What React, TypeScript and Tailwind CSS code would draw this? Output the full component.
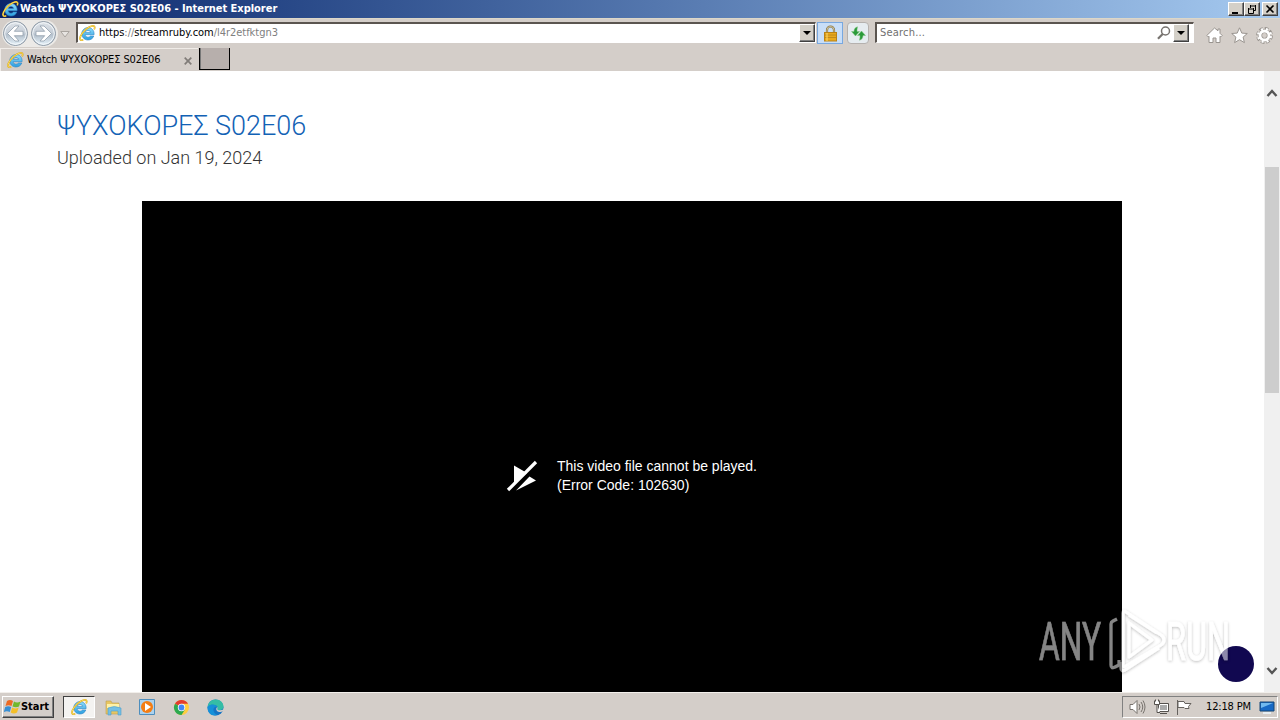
import { useId } from "react";

const pinned = ["ie", "folder", "media", "chrome", "edge"];

function IeIcon({ size = 17 }: { size?: number }) {
  const id = useId();
  return (
    <svg width={size} height={size} viewBox="0 0 17 17" fill="none" className="shrink-0">
      <defs>
        <linearGradient id={id} x1="0" y1="0" x2="0" y2="1">
          <stop stopColor="#8fdcfb" />
          <stop offset="1" stopColor="#2a9fe0" />
        </linearGradient>
      </defs>
      <path
        d="M9 2.600C5.400 2.600 2.800 5.300 2.800 8.800S5.400 15 9 15c2.800 0 4.900-1.500 5.800-4h-3.500c-.5.8-1.300 1.200-2.300 1.200-1.600 0-2.700-1-2.800-2.500h8.900C15.400 5.300 12.700 2.600 9 2.600zM6.300 7.400C6.600 6.200 7.600 5.400 9 5.400s2.300.8 2.600 2z"
        fill={`url(#${id})`}
        stroke="#2f83c4"
        strokeWidth=".6"
      />
      <path d="M4.200 14.800C.4 16.600-.3 13 3.500 8 7.300 3 13.800-.6 15.400 1.500c.5.7.3 1.700-.2 2.800" stroke="#d9a520" strokeWidth="1.700" />
      <path d="M4.200 14.800C.4 16.600-.3 13 3.500 8 7.300 3 13.800-.6 15.400 1.500c.5.7.3 1.700-.2 2.800" stroke="#fbe05a" strokeWidth="1" />
    </svg>
  );
}

function NavButton({ forward = false }: { forward?: boolean }) {
  const id = useId();
  return (
    <svg width="27" height="27" viewBox="0 0 27 27" className="shrink-0">
      <defs>
        <linearGradient id={id} x1="0" y1="0" x2="0" y2="1">
          <stop stopColor="#dfe4e9" />
          <stop offset=".48" stopColor="#c6ced7" />
          <stop offset=".55" stopColor="#b4c0cc" />
          <stop offset="1" stopColor="#e8f4fb" />
        </linearGradient>
      </defs>
      <circle cx="13.500" cy="13.500" r="12" fill={`url(#${id})`} stroke="#8c98a5" />
      <circle cx="13.500" cy="13.500" r="10.800" fill="none" stroke="#f4f8fb" />
      <path
        d="M13 6 5.500 13.500 13 21h4l-4.700-5.300H21v-4.400h-8.700L17 6z"
        fill="#fff"
        stroke="#8795a4"
        strokeWidth=".7"
        transform={forward ? "matrix(-1 0 0 1 27 0)" : undefined}
      />
    </svg>
  );
}

function DropButton() {
  return (
    <span className="flex h-[18px] w-4 shrink-0 items-center justify-center border border-t-white border-l-white border-r-[#404040] border-b-[#404040] bg-[#d4d0c8] shadow-[inset_-1px_-1px_0_#808080]">
      <svg width="8" height="4" viewBox="0 0 8 4"><path d="M0 0h8L4 4z" /></svg>
    </span>
  );
}

function TitleBar() {
  return (
    <div className="flex h-[18px] items-center bg-gradient-to-r from-[#0a246a] to-[#a6caf0] pl-[2px] pr-[2px]">
      <IeIcon />
      <span className="ml-px pt-px text-[11px] font-bold tracking-[-0.030px] text-white">Watch ΨΥΧΟΚΟΡΕΣ S02E06 - Internet Explorer</span>
      <div className="ml-auto flex">
        {["min", "restore", "close"].map((name) => (
          <span
            key={name}
            className="flex h-[14px] w-4 items-center justify-center border border-t-white border-l-white border-r-[#404040] border-b-[#404040] bg-[#d4d0c8] shadow-[inset_-1px_-1px_0_#808080] last:ml-[2px]"
          >
            <svg width="12" height="11" viewBox="0 0 12 11" fill="none" stroke="#000" className="shrink-0">
              {name === "min" && <path d="M2 9h6" strokeWidth="2" />}
              {name === "restore" && <path d="M4 2h6M4.500 1v3M9.500 1v5.500H8M2 5h6M2.500 4v5.500h5V4" />}
              {name === "close" && <path d="m2.500 1.500 7 7m0-7-7 7" strokeWidth="1.600" />}
            </svg>
          </span>
        ))}
      </div>
    </div>
  );
}

function NavBar() {
  return (
    <div className="flex h-[30px] items-start border-t border-[#dcd7c8] pt-px">
      <div className="ml-[2px] flex h-[27px] w-[56px] shrink-0 gap-px rounded-full bg-[#eceae7]">
        <NavButton />
        <NavButton forward />
      </div>
      <svg width="10" height="7" viewBox="0 0 10 7" className="mt-[11px] ml-[2px] shrink-0">
        <path d="M.8.500h8.400L5 6z" fill="#e7e4e1" stroke="#aaa5a0" />
      </svg>
      <div className="mt-[2px] ml-[6px] flex h-[21px] w-[740px] shrink-0 items-center border-t-2 border-l-2 border-r border-b border-t-[#5b5550] border-l-[#5b5550] border-r-white border-b-white bg-white pl-px">
        <IeIcon />
        <span className="ml-[3px] pt-px text-[11px] tracking-[-0.030px] text-[#808080]">
          <span className="text-black">https</span>://<span className="text-black">streamruby.com</span>/l4r2etfktgn3
        </span>
        <span className="ml-auto"><DropButton /></span>
      </div>
      <div className="mt-[2px] ml-px flex h-[22px] w-[26px] shrink-0 items-center justify-center border border-[#78a8e0] bg-[#c8def8]">
        <svg width="15" height="17" viewBox="0 0 15 17">
          <path d="M4 8V5a3.500 3.500 0 0 1 7 0v3" fill="none" stroke="#8a7440" strokeWidth="2.200" />
          <path d="M4 8V5a3.500 3.500 0 0 1 7 0v3" fill="none" stroke="#d9d3b4" strokeWidth=".8" />
          <rect x="1.500" y="7.500" width="12" height="8.500" fill="#e9a91e" stroke="#b98217" />
          <path d="M2 10h11M2 12.500h11" stroke="#c08a1c" />
          <path d="M4 8v8" stroke="#ffda6a" />
        </svg>
      </div>
      <div className="mt-[2px] ml-[4px] flex h-[22px] w-[22px] shrink-0 items-center justify-center rounded-sm border border-[#b5b1ae] bg-[#e6ecf0]">
        <svg width="17" height="15" viewBox="0 0 17 15" fill="#2a9a3a" className="shrink-0">
          <path d="M7.500.8C5 1.500 4 3.200 4 5.500H1.500L5.500 10l4-4.500H7c0-1.500 0-3 .5-4.700zM9.500 14.200c2.500-.7 3.500-2.400 3.500-4.700h2.500l-4-4.500-4 4.500H10c0 1.500 0 3-.5 4.700z" stroke="#7cc47d" strokeWidth=".5" />
        </svg>
      </div>
      <div className="mt-[2px] ml-[6px] flex h-[21px] w-[319px] shrink-0 items-center border-t-2 border-l-2 border-r border-b border-t-[#5b5550] border-l-[#5b5550] border-r-white border-b-white bg-white pr-[4px] pl-[3px]">
        <span className="pt-px text-[11px] tracking-[0.200px] text-[#707070]">Search...</span>
        <svg width="14" height="14" viewBox="0 0 14 14" fill="none" stroke="#77736f" className="mr-[2px] ml-auto">
          <circle cx="8.500" cy="5" r="4" strokeWidth="1.500" />
          <path d="M5.700 8 1 12.800" strokeWidth="2.200" />
        </svg>
        <DropButton />
      </div>
      <div className="mt-[7px] ml-[12px] flex shrink-0 gap-[8px]">
        <svg width="17" height="17" viewBox="0 0 17 17" fill="#fff" stroke="#99948f">
          <path d="M8.500 1 .8 8.500l1.400 1.400.8-.7v6.300h4V11h3v4.500h4V9.200l.8.700 1.400-1.400-2.200-2.200V2h-2v1.800z" />
        </svg>
        <svg width="17" height="17" viewBox="0 0 17 17" fill="#fff" stroke="#99948f">
          <path d="m8.500.8 2.300 5.300 5.500.4-4.200 3.600 1.300 5.500-4.900-2.900-4.900 2.900 1.300-5.500L.7 6.500l5.500-.4z" />
        </svg>
        <svg width="17" height="17" viewBox="0 0 17 17" fill="none">
          <circle cx="8.500" cy="8.500" r="6.900" stroke="#99948f" strokeWidth="3" strokeDasharray="3.600 1.819" />
          <circle cx="8.500" cy="8.500" r="4.400" stroke="#99948f" strokeWidth="4" />
          <circle cx="8.500" cy="8.500" r="4.500" stroke="#fff" strokeWidth="2.800" />
          <circle cx="8.500" cy="8.500" r="6.500" stroke="#fff" strokeWidth="2.200" strokeDasharray="2 3.105" strokeDashoffset="-.7" />
        </svg>
      </div>
    </div>
  );
}

function TabBar() {
  return (
    <div className="flex h-[23px] items-start">
      <div className="flex h-[23px] w-[198px] shrink-0 items-center border-t border-l border-[#f0ece8] pl-[6px]">
        <IeIcon />
        <span className="ml-[3px] pt-px text-[11px] tracking-[-0.110px]">Watch ΨΥΧΟΚΟΡΕΣ S02E06</span>
        <svg width="8" height="8" viewBox="0 0 8 8" className="mt-px mr-[6px] ml-auto">
          <path d="m.7.700 6.600 6.600m0-6.600L.7 7.300" stroke="#807c78" strokeWidth="1.700" />
        </svg>
      </div>
      <div className="ml-px h-[22px] w-[31px] border-r border-b border-l border-black bg-[#b7afac] shadow-[inset_1px_0_0_#777]" />
    </div>
  );
}

function Watermark() {
  return (
    <svg width="202" height="72" viewBox="0 0 202 72" className="pointer-events-none absolute top-[534px] left-[1034px]">
      <defs>
        <filter id="soft" x="-20%" y="-20%" width="140%" height="140%">
          <feDropShadow dx="0" dy="1" stdDeviation="1.500" floodColor="#000" floodOpacity=".5" />
        </filter>
      </defs>
      <g filter="url(#soft)" fontFamily="Roboto" fontSize="53" fill="#fff" stroke="#fff" strokeWidth=".7" opacity=".52">
        <text x="5" y="55" textLength="62" lengthAdjust="spacingAndGlyphs">ANY</text>
        <text x="132" y="55" textLength="64" lengthAdjust="spacingAndGlyphs">RUN</text>
        <g fill="none" strokeWidth="3.200" strokeLinejoin="round">
          <path d="M83 14l-4 2q-2 1-2 3v41q0 4 4 2l4-2v-5" />
          <path d="M89 53V8q0-3 3-1l35 23q3 2 3 5t-3 5L92 61q-3 2-3-1z" />
          <path d="M95 18v34l23-17zM95 10l28 18M87 57v6q0 4 4 2l34-22" />
        </g>
      </g>
    </svg>
  );
}

function Page() {
  return (
    <main className="relative flex h-[621px] overflow-hidden bg-white">
      <div className="flex w-[1264px] flex-col pt-[38px]">
        <h1 className="pl-[57px] font-[Roboto] text-[27px] leading-[34px] font-light tracking-[-0.010px] text-[#1262b5]">ΨΥΧΟΚΟΡΕΣ S02E06</h1>
        <p className="pl-[57px] font-[Roboto] text-[18px] leading-[29px] font-light text-[#333]">Uploaded on Jan 19, 2024</p>
        <div className="mt-[29px] ml-[142px] flex h-[491px] w-[980px] bg-black pt-[256px] pl-[364px] text-white">
          <svg width="32" height="32" viewBox="0 0 32 32" fill="#fff" className="mt-[3px] shrink-0">
            <path d="M8 5.500 21 13l-13 11zM10 30.500 23.500 16.500 30 20.500z" />
            <path d="M4 32 32 4" stroke="#000" strokeWidth="2.200" />
            <path d="M2 30 30 2" stroke="#fff" strokeWidth="3.200" />
          </svg>
          <p className="ml-[19px] font-['Liberation_Sans'] text-[14px] leading-[19px]">
            This video file cannot be played.<br />(Error Code: 102630)
          </p>
        </div>
      </div>
      <div className="flex w-4 flex-col items-center bg-[#f0f0f0] pt-[18px] pb-[17px]">
        <svg width="12" height="9" viewBox="0 0 12 9" className="shrink-0"><path d="m1.500 7 4.500-5 4.500 5" fill="none" stroke="#555" strokeWidth="2.400" /></svg>
        <div className="mt-[69px] h-[226px] w-[14px] shrink-0 bg-[#cdcdcd]" />
        <svg width="12" height="9" viewBox="0 0 12 9" className="mt-auto shrink-0"><path d="m1.500 2 4.500 5 4.500-5" fill="none" stroke="#555" strokeWidth="2.400" /></svg>
      </div>
      <div className="absolute top-[575px] left-[1218px] size-9 rounded-full bg-[#110850]" />
      <Watermark />
    </main>
  );
}

function PinnedIcon({ name }: { name: string }) {
  if (name === "ie") return <IeIcon />;
  return (
    <svg width="17" height="17" viewBox="0 0 17 17">
      {name === "folder" && (
        <>
          <path d="M1 2h5l1 2h7v11H1z" fill="#e8c661" stroke="#bd9e50" strokeWidth=".6" />
          <path d="M2 5h12v4H2z" fill="#fff1a8" />
          <path d="M3 9q6-3 13 0v7h-3v-4H6v4H3z" fill="#75bfe4" stroke="#4b9fc9" strokeWidth=".6" />
        </>
      )}
      {name === "media" && (
        <>
          <path d="M.500.500h15v15H.500z" fill="#acd2ee" stroke="#4e8ebd" />
          <circle cx="8" cy="8" r="6" fill="#f47d13" />
          <path d="m6 4 6 4-6 4z" fill="#fff" />
        </>
      )}
      {name === "chrome" && (
        <>
          <circle cx="8.500" cy="8.500" r="7.500" fill="#ffcd40" />
          <path d="M8.500 8.500 2 4.700A7.500 7.500 0 0 1 15 4.700H8.500z" fill="#e33b2e" />
          <path d="M2 4.700A7.500 7.500 0 0 0 8.500 16l3.500-5.500-3.500-2z" fill="#2da94f" />
          <circle cx="8.500" cy="8.500" r="3.700" fill="#fff" />
          <circle cx="8.500" cy="8.500" r="2.900" fill="#4285f4" />
        </>
      )}
      {name === "edge" && (
        <>
          <circle cx="8.500" cy="8.500" r="8" fill="#1674c4" />
          <path d="M.6 8C1 3.500 4.500.500 8.500.500c5 0 8 3.500 8 7 0 3-3 4-5.500 3.500-2-.500-.5-1.500-.5-3C10.500 6 4 4 .6 8z" fill="#35bda5" />
          <path d="M.6 8C3 4.500 9 5 10.500 8c-2-1-4.500.500-4 3.500.4 2.500 2.500 4 4 4.500C4.500 18 0 13.500.6 8z" fill="#1690d8" />
          <path d="M10.500 8c-2 1-1.500 4 1 4.800 1.700.5 3 .2 4.500-.5l1-2c-2 1-4.500 1.200-6 .7-1.200-.5-.5-1.500-.5-3z" fill="#d4cec9" />
        </>
      )}
    </svg>
  );
}

function Taskbar() {
  return (
    <footer className="flex h-7 items-center border-t border-[#f2efeb] bg-[#d4cec9] pt-px">
      <div className="ml-[2px] flex h-[22px] w-[52px] items-center border border-t-white border-l-white border-r-[#404040] border-b-[#404040] shadow-[inset_-1px_-1px_0_#808080]">
        <svg width="17" height="16" viewBox="0 0 17 16" className="ml-px shrink-0">
          <path d="M3 2q3-2 6 0L7.500 7q-3-1.500-6 0z" fill="#ed6a23" />
          <path d="M10 2.500q3 2 6.500 0L15 7.500q-3 1.500-6.500 0z" fill="#70b82c" />
          <path d="M1.200 8q3-1.500 6 0L5.800 13q-3-1.500-6 0z" fill="#388fd4" />
          <path d="M8.200 8.500q3 2 6.500 0L13 13.500q-3 2-6.300 0z" fill="#f4bf28" />
        </svg>
        <span className="pt-px text-[11px] font-bold tracking-[-0.050px]">Start</span>
      </div>
      <div className="ml-[9px] flex">
        {pinned.map((name) => (
          <span
            key={name}
            className="mr-[2px] flex h-[22px] w-8 items-center justify-center first:border first:border-t-[#404040] first:border-l-[#404040] first:border-r-white first:border-b-white first:bg-[#f4f3f1]"
          >
            <PinnedIcon name={name} />
          </span>
        ))}
      </div>
      <div className="mr-[2px] ml-auto flex h-[22px] w-[156px] items-center border border-t-[#808080] border-l-[#808080] border-r-white border-b-white pl-[6px]">
        <svg width="17" height="16" viewBox="0 0 17 16" fill="#fff" stroke="#77726d" className="shrink-0">
          <path d="M1 5.500h3l4-4v13l-4-4H1z" />
          <path d="M10 5q2 3 0 6M12 3q3.500 5 0 10M14 1.500q4 6.500 0 13" fill="none" />
        </svg>
        <svg width="17" height="16" viewBox="0 0 17 16" fill="#fff" stroke="#55514d" className="ml-[7px] shrink-0">
          <path d="M5.500 4.500h10v8h-10zM7 14.500h7" />
          <path d="M7 6h7v5H7z" fill="#aaa" stroke="none" />
          <path d="M1.500 1.500v4h5v-4M2.500.5v2M5.500.5v2M4 5.500v8h3" />
        </svg>
        <svg width="17" height="16" viewBox="0 0 17 16" fill="#fff" stroke="#66625e" className="ml-[6px] shrink-0">
          <path d="M1.500 1v15M2 2.500h6l1 2h6l-2.500 3 .5 2H9l-1-1H2z" />
        </svg>
        <span className="ml-[13px] pt-px text-[11px] tracking-[-0.150px] whitespace-nowrap">12:18 PM</span>
        <svg width="16" height="15" viewBox="0 0 16 15" className="mr-[2px] ml-auto shrink-0">
          <path d="M1 2h14v9H1z" fill="#1769c5" stroke="#174674" />
          <path d="M2 3h12L2 8z" fill="#70b9ef" />
          <path d="M4 13h8" stroke="#e8eef2" strokeWidth="2" />
        </svg>
      </div>
    </footer>
  );
}

export default function App() {
  return (
    <div className="h-[720px] w-[1280px] overflow-hidden bg-[#d4cec9] font-['DejaVu_Sans_Condensed','DejaVu_Sans',sans-serif] text-black">
      <TitleBar />
      <NavBar />
      <TabBar />
      <Page />
      <Taskbar />
    </div>
  );
}
